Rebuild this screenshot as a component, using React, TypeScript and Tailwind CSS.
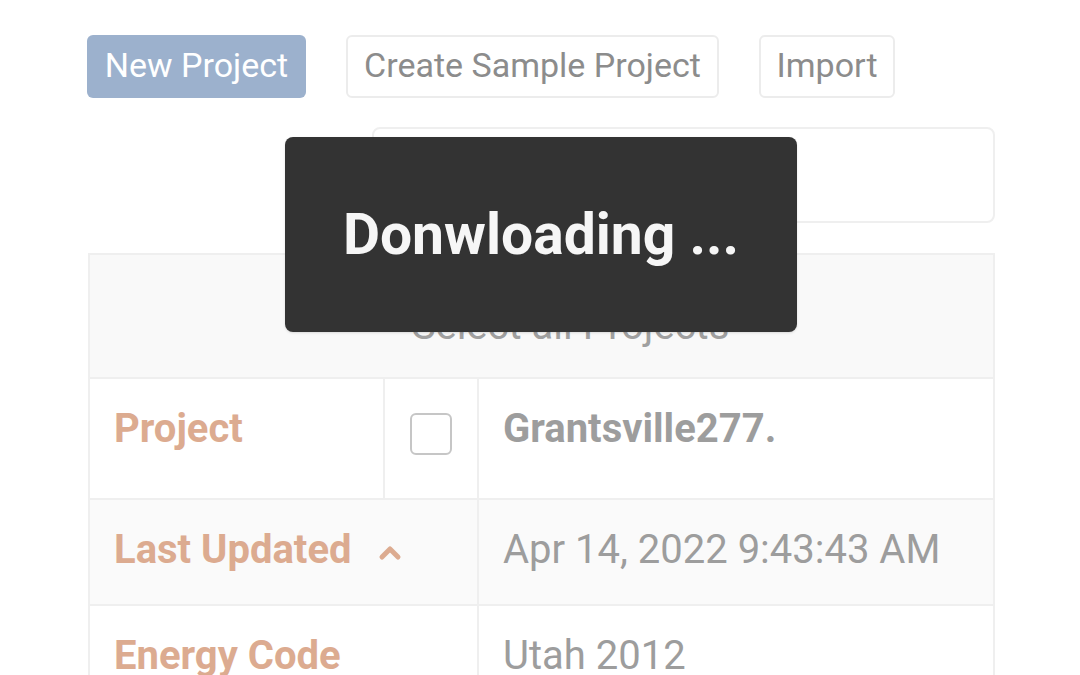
import React from "react";

const label = "text-[#dcab90] font-bold text-[40px]";

export default function App() {
  return (
    <div className="relative h-[675px] w-[1080px] overflow-hidden bg-white font-['Roboto',sans-serif]">
      <div className="pl-[87px] pr-[85px] pt-[35px]">
        {/* toolbar */}
        <div className="flex items-center gap-10">
          <button className="h-[63px] w-[219px] rounded-[6px] bg-[#9cb1cd] pb-1 text-[34px] leading-none text-white">
            New Project
          </button>
          <button className="h-[63px] w-[373px] rounded-[6px] border-2 border-[#ececec] pb-1 text-[34px] leading-none text-[#8c8c8c]">
            Create Sample Project
          </button>
          <button className="h-[63px] w-[136px] rounded-[6px] border-2 border-[#ececec] pb-1 text-[34px] leading-none text-[#8c8c8c]">
            Import
          </button>
        </div>

        {/* search */}
        <div className="mt-[29px] ml-[285px] h-[96px] rounded-[8px] border-2 border-[#efefef]" />

        {/* table */}
        <div className="mt-[30px] ml-px border-2 border-[#efefef]">
          <div className="flex h-[122px] items-center justify-center bg-[#f9f9f9] pt-5 text-[40px] text-[#a0a0a0]">
            <span className="ml-[58px]">Select all Projects</span>
          </div>
          <div className="grid grid-cols-[293px_94px_1fr]">
            <div className="flex h-[121px] items-start border-t-2 border-[#efefef] pt-5 pl-6">
              <span className={label}>Project</span>
            </div>
            <div className="flex items-start justify-center border-t-2 border-l-2 border-[#efefef] pt-[34px]">
              <div className="h-[42px] w-[42px] rounded-[6px] border-2 border-[#c6c6c6]" />
            </div>
            <div className="flex items-start border-t-2 border-l-2 border-[#efefef] pt-5 pl-6 text-[40px] font-bold text-[#9d9d9d]">
              Grantsville277.
            </div>

            <div className="col-span-2 flex h-[106px] items-center gap-[24px] border-t-2 border-[#efefef] bg-[#fafafa] pl-6 pb-1">
              <span className={label}>Last Updated</span>
              <svg width="28" height="20" viewBox="0 0 28 20" className="mt-1">
                <path d="M6 15 L14 7 L22 15" fill="none" stroke="#dcab90" strokeWidth="5" strokeLinecap="round" strokeLinejoin="round" />
              </svg>
            </div>
            <div className="flex items-center border-t-2 border-l-2 border-[#efefef] bg-[#fafafa] pl-6 pb-1 text-[40px] text-[#9d9d9d]">
              Apr 14, 2022 9:43:43 AM
            </div>

            <div className="col-span-2 flex h-[106px] items-center border-t-2 border-[#efefef] pl-6 pb-1">
              <span className={label}>Energy Code</span>
            </div>
            <div className="flex items-center border-t-2 border-l-2 border-[#efefef] pl-6 pb-1 text-[40px] text-[#9d9d9d]">
              Utah 2012
            </div>
          </div>
        </div>
      </div>

      {/* toast */}
      <div className="absolute top-[137px] left-[285px] flex h-[195px] w-[512px] items-center justify-center rounded-[8px] bg-[#333333] shadow-sm">
        <span className="text-[57px] font-bold text-[#f6f6f6]">Donwloading ...</span>
      </div>
    </div>
  );
}
